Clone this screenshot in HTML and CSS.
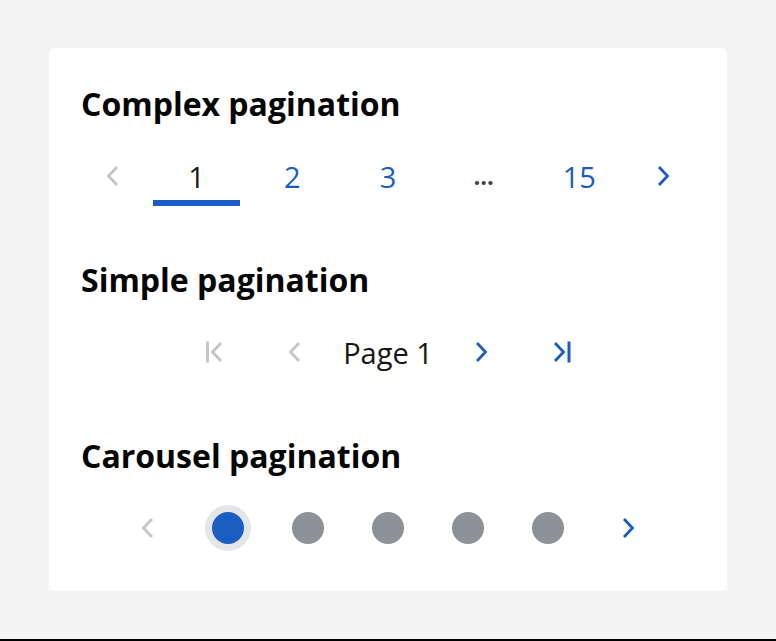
FILE: index.html
```html
<!DOCTYPE html>
<html lang="en">
<head>
<meta charset="utf-8">
<title>Pagination</title>
<link rel="stylesheet" href="styles.css">
</head>
<body>
<div class="page">
  <div class="card">
    <section class="section">
      <h2 class="title">Complex pagination</h2>
      <div class="row complex">
        <span class="cell arrow disabled">
          <svg width="28" height="28" viewBox="0 0 28 28"><path d="M18 5 L9.5 14 L18 23" /></svg>
        </span>
        <span class="cell num current">1</span>
        <span class="cell num">2</span>
        <span class="cell num">3</span>
        <span class="cell num dots">...</span>
        <span class="cell num">15</span>
        <span class="cell arrow">
          <svg width="28" height="28" viewBox="0 0 28 28"><path d="M10 5 L18.5 14 L10 23" /></svg>
        </span>
      </div>
    </section>

    <section class="section">
      <h2 class="title">Simple pagination</h2>
      <div class="row simple">
        <span class="icell disabled">
          <svg width="28" height="28" viewBox="0 0 28 28"><path d="M6.5 3.5 V24.5" class="bar"/><path d="M20 5 L11.5 14 L20 23" /></svg>
        </span>
        <span class="icell disabled">
          <svg width="28" height="28" viewBox="0 0 28 28"><path d="M18 5 L9.5 14 L18 23" /></svg>
        </span>
        <span class="pagelabel">Page 1</span>
        <span class="icell">
          <svg width="28" height="28" viewBox="0 0 28 28"><path d="M10 5 L18.5 14 L10 23" /></svg>
        </span>
        <span class="icell">
          <svg width="28" height="28" viewBox="0 0 28 28"><path d="M8 5 L16.5 14 L8 23" /><path d="M22 3.5 V24.5" class="bar"/></svg>
        </span>
      </div>
    </section>

    <section class="section">
      <h2 class="title">Carousel pagination</h2>
      <div class="row carousel">
        <span class="ccell disabled">
          <svg width="28" height="28" viewBox="0 0 28 28"><path d="M18 5 L9.5 14 L18 23" /></svg>
        </span>
        <span class="ccell"><span class="dot active"></span></span>
        <span class="ccell"><span class="dot"></span></span>
        <span class="ccell"><span class="dot"></span></span>
        <span class="ccell"><span class="dot"></span></span>
        <span class="ccell"><span class="dot"></span></span>
        <span class="ccell">
          <svg width="28" height="28" viewBox="0 0 28 28"><path d="M10 5 L18.5 14 L10 23" /></svg>
        </span>
      </div>
    </section>
  </div>
</div>
</body>
</html>
```

FILE: styles.css
```css
* { box-sizing: border-box; }

html, body {
  margin: 0;
  padding: 0;
}

body {
  font-family: "Open Sans", "Noto Sans", sans-serif;
  color: #161616;
}

.page {
  height: 641px;
  background: #f4f4f4;
  border-bottom: 2px solid #000;
  padding: 48px 49px 0 49px;
}

.card {
  width: 678px;
  height: 543px;
  background: #ffffff;
  border-radius: 6px;
  padding: 38px 32px 0 32px;
}

.section + .section {
  margin-top: 56px;
}

.title {
  margin: 0;
  font-size: 32px;
  font-weight: 700;
  line-height: 36px;
  color: #050505;
}

.row {
  margin-top: 24px;
  height: 60px;
  display: flex;
  align-items: center;
  justify-content: center;
}

svg path {
  fill: none;
  stroke: currentColor;
  stroke-width: 2.8;
  stroke-linecap: butt;
  stroke-linejoin: miter;
}

svg path.bar {
  stroke-width: 3;
}

.complex {
  gap: 8px;
  align-items: stretch;
}

.cell {
  height: 60px;
  display: flex;
  align-items: center;
  justify-content: center;
  color: #1b5dc3;
}

.cell.arrow {
  width: 64px;
}

.cell.num {
  width: 88px;
  font-size: 29px;
  font-weight: 500;
  line-height: 1;
  border-bottom: 6px solid transparent;
  padding-top: 6px;
}

.cell.current {
  color: #161616;
  border-bottom-color: #1b5dc3;
}

.cell.dots {
  color: #444;
  font-size: 24px;
  font-weight: 700;
}

.disabled {
  color: #c6c6c6 !important;
}

.simple {
  gap: 16px;
}

.icell {
  width: 64px;
  height: 60px;
  display: flex;
  align-items: center;
  justify-content: center;
  color: #1b5dc3;
}

.pagelabel {
  font-size: 29px;
  font-weight: 500;
  color: #161616;
}

.carousel {
  gap: 0;
}

.ccell {
  width: 80px;
  height: 60px;
  display: flex;
  align-items: center;
  justify-content: center;
  color: #1b5dc3;
}

.dot {
  width: 32px;
  height: 32px;
  border-radius: 50%;
  background: #8d9199;
}

.dot.active {
  background: #1b5dc3;
  box-shadow: 0 0 0 7px #e3e5e8;
}
```
